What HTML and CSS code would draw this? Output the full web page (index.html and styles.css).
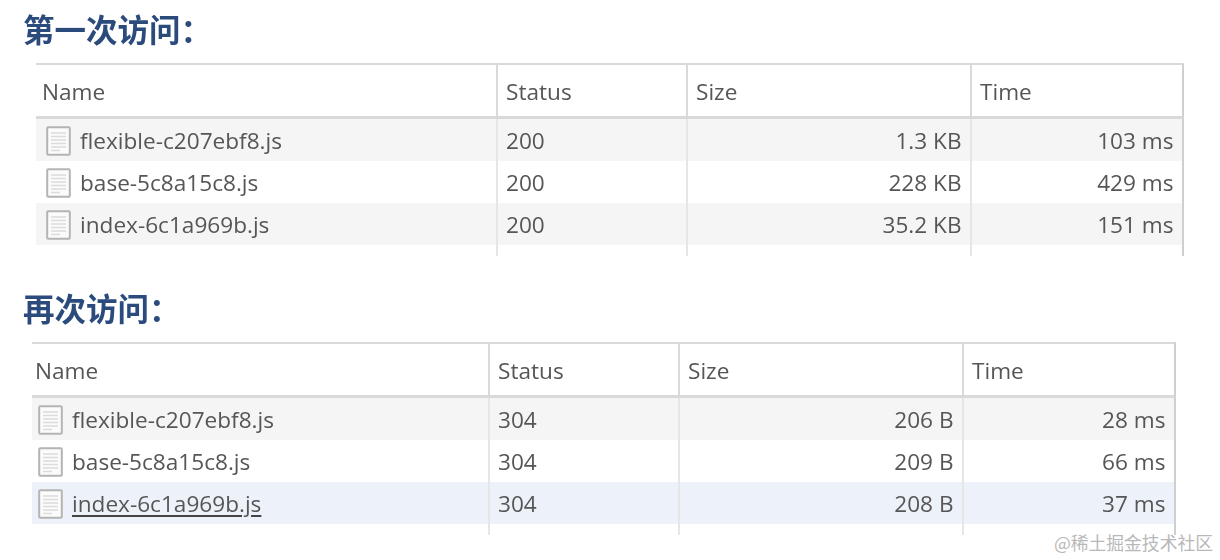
FILE: index.html
```html
<!DOCTYPE html>
<html lang="zh-CN">
<head>
<meta charset="utf-8">
<title>访问</title>
<link rel="stylesheet" href="styles.css">
</head>
<body>
<svg class="defs" width="0" height="0" aria-hidden="true">
  <symbol id="doc" viewBox="0 0 25 30">
    <rect x="1.2" y="1.2" width="22.6" height="27.6" rx="1" fill="#fbfbfb" stroke="#b4b4b4" stroke-width="2"/>
    <path d="M5 7h15M5 10.500h15M5 14h15M5 17.500h15M5 21h15M5 24.500h9" stroke="#dcdcdc" stroke-width="1.300" fill="none"/>
  </symbol>
</svg>
<main class="shot">
  <section class="block first">
    <h2 class="title">第一次访问：</h2>
    <table class="net">
      <thead><tr><th class="c-name">Name</th><th class="c-status">Status</th><th class="c-size">Size</th><th class="c-time">Time</th></tr></thead>
      <tbody>
        <tr><td><span class="file"><svg class="ico"><use href="#doc"/></svg>flexible-c207ebf8.js</span></td><td>200</td><td class="num">1.3 KB</td><td class="num">103 ms</td></tr>
        <tr><td><span class="file"><svg class="ico"><use href="#doc"/></svg>base-5c8a15c8.js</span></td><td>200</td><td class="num">228 KB</td><td class="num">429 ms</td></tr>
        <tr><td><span class="file"><svg class="ico"><use href="#doc"/></svg>index-6c1a969b.js</span></td><td>200</td><td class="num">35.2 KB</td><td class="num">151 ms</td></tr>
        <tr class="tail"><td></td><td></td><td></td><td></td></tr>
      </tbody>
    </table>
  </section>
  <section class="block second">
    <h2 class="title">再次访问：</h2>
    <table class="net">
      <thead><tr><th class="c-name">Name</th><th class="c-status">Status</th><th class="c-size">Size</th><th class="c-time">Time</th></tr></thead>
      <tbody>
        <tr><td><span class="file"><svg class="ico"><use href="#doc"/></svg>flexible-c207ebf8.js</span></td><td>304</td><td class="num">206 B</td><td class="num">28 ms</td></tr>
        <tr><td><span class="file"><svg class="ico"><use href="#doc"/></svg>base-5c8a15c8.js</span></td><td>304</td><td class="num">209 B</td><td class="num">66 ms</td></tr>
        <tr class="selected"><td><span class="file"><svg class="ico"><use href="#doc"/></svg><u class="link">index-6c1a969b.js</u></span></td><td>304</td><td class="num">208 B</td><td class="num">37 ms</td></tr>
        <tr class="tail"><td></td><td></td><td></td><td></td></tr>
      </tbody>
    </table>
  </section>
</main>
<div class="watermark">@稀土掘金技术社区</div>
</body>
</html>
```
FILE: styles.css
```css
* { box-sizing: border-box; }
html, body { margin: 0; padding: 0; background: #fff; }
body { width: 1220px; height: 560px; overflow: hidden; position: relative; font-family: "Open Sans", "Noto Sans", sans-serif; }
.defs { position: absolute; }
.shot { filter: blur(0.45px); }
.block { display: flex; flex-direction: column; }
.title {
  margin: 0 0 0 23px;
  height: 63px;
  padding-top: 8px;
  font: 700 31.500px/40px "Noto Sans CJK TC", "Noto Sans CJK SC", sans-serif;
  color: #2b4b7d;
}
.second { margin-top: 24px; }
.second .title { height: 62px; padding-top: 7px; }
.net { border-collapse: separate; border-spacing: 0; table-layout: fixed; color: #565656; font-size: 22.600px; }
.first .net { margin-left: 36px; width: 1148px; }
.second .net { margin-left: 32px; width: 1144px; }
.c-status { width: 190px; }
.c-size { width: 284px; }
.first .c-name { width: 462px; }
.second .c-name { width: 458px; }
th {
  height: 56px;
  padding: 2px 0 0 8px;
  text-align: left;
  font-weight: 400;
  border-top: 2px solid #d9d9d9;
  border-bottom: 3px solid #d9d9d9;
  border-right: 2px solid #d9d9d9;
}
th:first-child { padding-left: 6px; }
.second th:first-child { padding-left: 3px; }
td {
  height: 42px;
  padding: 0 0 0 8px;
  border-right: 2px solid #e6e6e6;
  white-space: nowrap;
}
td:last-child, th:last-child { border-right-color: #cfcfcf; }
tbody tr:nth-child(odd) td { background: #f5f5f5; }
tbody tr.selected td { background: #edf2fa; }
tbody tr.tail td { background: #fff; height: 11px; padding: 0; }
.num { text-align: right; padding: 0 8.500px 0 0; }
.file { display: flex; align-items: center; gap: 9px; padding-left: 2px; }
.second td:first-child { padding-left: 4px; }
.second .file { padding-left: 2px; }
.ico { width: 25px; height: 30px; flex: none; margin-top: 2px; }
.link { text-decoration: underline 2px #444; text-underline-offset: 3px; }
.watermark {
  position: absolute;
  right: 7px;
  bottom: 6px;
  font: 400 17.800px/24px "Noto Sans CJK SC", sans-serif;
  color: #b8b8b8;
}
```
